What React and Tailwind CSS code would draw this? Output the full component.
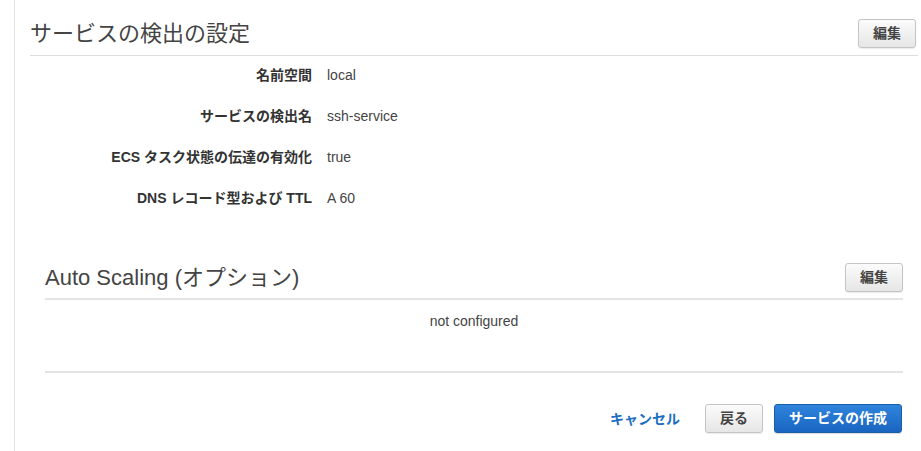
import React from "react";

const font = { fontFamily: '"Liberation Sans", "Noto Sans CJK JP", sans-serif' };

function GrayButton({ children, className = "" }) {
  return (
    <button
      className={
        "h-[29px] rounded-[3px] border border-[#c4c4c4] bg-gradient-to-b from-[#fbfbfb] to-[#e6e6e6] px-[14px] text-[14px] font-bold leading-[27px] text-[#444] shadow-[0_1px_1px_rgba(0,0,0,0.08)] " +
        className
      }
    >
      {children}
    </button>
  );
}

const rows = [
  ["名前空間", "local"],
  ["サービスの検出名", "ssh-service"],
  ["ECS タスク状態の伝達の有効化", "true"],
  ["DNS レコード型および TTL", "A 60"],
];

export default function App() {
  return (
    <div className="h-[451px] w-[921px] overflow-hidden bg-white" style={font}>
      <div className="ml-[14px] h-full border-l border-[#e3e3e3] pl-[15px] pr-[3px]">
        {/* Service discovery section */}
        <div className="flex items-center justify-between border-b border-[#dddddd] pb-[7px] pt-[19px]">
          <h2 className="text-[22px] font-normal leading-[28px] text-[#444]">サービスの検出の設定</h2>
          <GrayButton className="mr-[2px]">編集</GrayButton>
        </div>
        <div className="flex flex-col gap-[21px] pt-[9px]">
          {rows.map(([label, value]) => (
            <div key={label} className="flex h-[20px] items-center text-[14px] leading-[20px]">
              <div className="w-[282px] text-right font-bold text-[#333]">{label}</div>
              <div className="pl-[15px] text-[#444]">{value}</div>
            </div>
          ))}
        </div>

        {/* Auto Scaling section */}
        <div className="mx-[15px] mt-[55px]">
          <div className="flex items-center justify-between border-b-2 border-[#e4e4e4] pb-[6px]">
            <h2 className="text-[22px] font-normal leading-[28px] text-[#444]">Auto Scaling (オプション)</h2>
            <GrayButton>編集</GrayButton>
          </div>
          <div className="h-[73px] border-b-2 border-[#e4e4e4] pt-[12px] text-center text-[14px] leading-[18px] text-[#444]">
            not configured
          </div>
          <div className="mt-[31px] flex items-center justify-end">
            <a className="mr-[25px] cursor-pointer text-[14px] font-bold leading-[20px] text-[#1b6ec2]">キャンセル</a>
            <GrayButton className="mr-[11px] px-[14px]">戻る</GrayButton>
            <button className="mr-[1px] h-[29px] rounded-[3px] border border-[#1b5ea8] bg-gradient-to-b from-[#2f84dc] to-[#1965c1] px-[14px] text-[14px] font-bold leading-[27px] text-white shadow-[0_1px_1px_rgba(0,0,0,0.15)]">
              サービスの作成
            </button>
          </div>
        </div>
      </div>
    </div>
  );
}
